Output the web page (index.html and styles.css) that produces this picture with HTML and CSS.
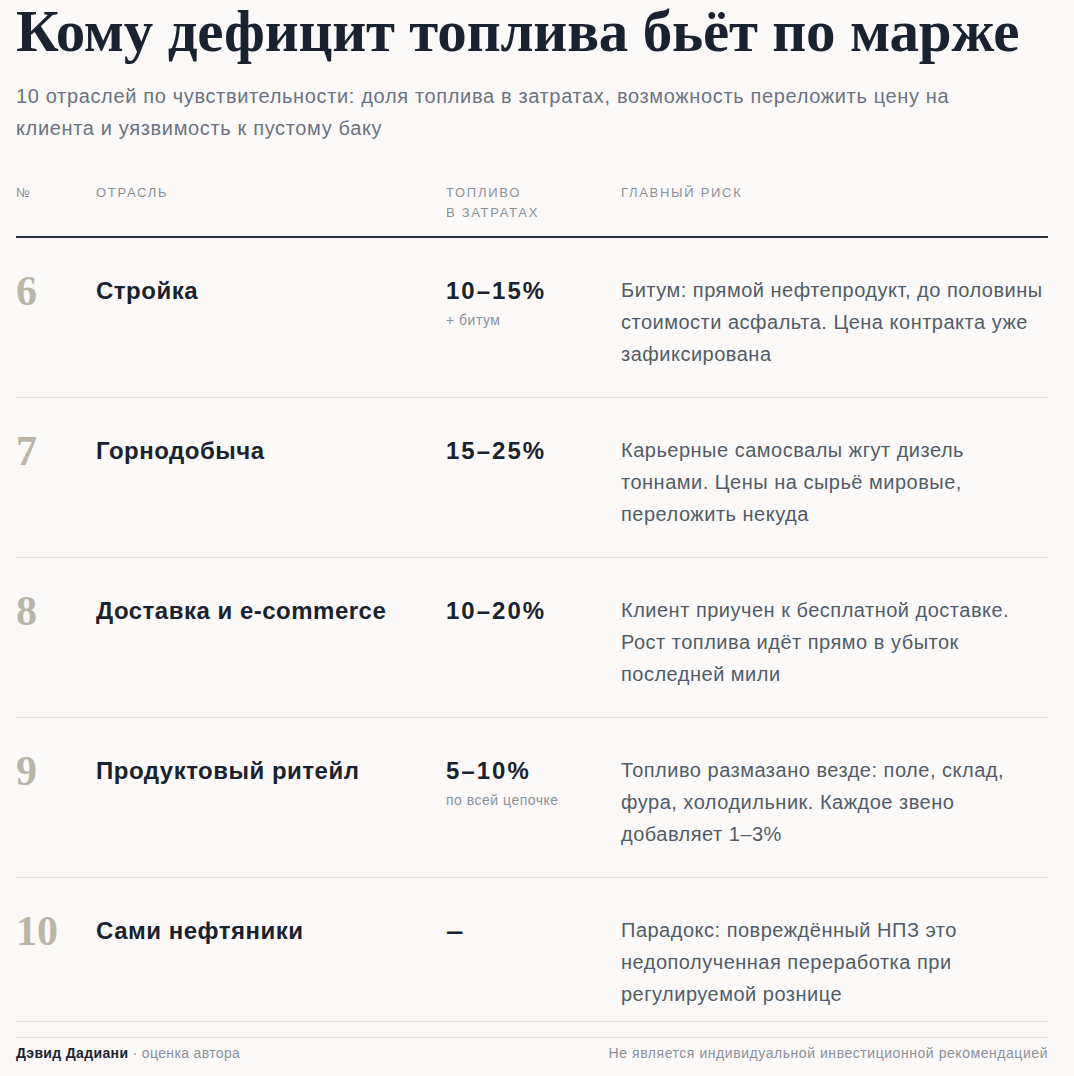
FILE: index.html
```html
<!DOCTYPE html>
<html lang="ru">
<head>
<meta charset="utf-8">
<title>Кому дефицит топлива бьёт по марже</title>
<link rel="stylesheet" href="styles.css">
</head>
<body>
<main class="page">
  <h1 class="title">Кому дефицит топлива бьёт по марже</h1>
  <p class="lead">10 отраслей по чувствительности: доля топлива в затратах, возможность переложить цену на клиента и уязвимость к пустому баку</p>

  <div class="table">
    <div class="head">
      <div class="th">№</div>
      <div class="th">Отрасль</div>
      <div class="th">Топливо<br>в затратах</div>
      <div class="th">Главный риск</div>
    </div>

    <div class="row">
      <div class="num">6</div>
      <div class="name">Стройка</div>
      <div class="fuel"><div class="val">10–15%</div><div class="note">+ битум</div></div>
      <div class="risk">Битум: прямой нефтепродукт, до половины стоимости асфальта. Цена контракта уже зафиксирована</div>
    </div>

    <div class="row">
      <div class="num">7</div>
      <div class="name">Горнодобыча</div>
      <div class="fuel"><div class="val">15–25%</div></div>
      <div class="risk">Карьерные самосвалы жгут дизель тоннами. Цены на сырьё мировые, переложить некуда</div>
    </div>

    <div class="row">
      <div class="num">8</div>
      <div class="name">Доставка и e-commerce</div>
      <div class="fuel"><div class="val">10–20%</div></div>
      <div class="risk">Клиент приучен к бесплатной доставке. Рост топлива идёт прямо в убыток последней мили</div>
    </div>

    <div class="row">
      <div class="num">9</div>
      <div class="name">Продуктовый ритейл</div>
      <div class="fuel"><div class="val">5–10%</div><div class="note">по всей цепочке</div></div>
      <div class="risk">Топливо размазано везде: поле, склад, фура, холодильник. Каждое звено добавляет 1–3%</div>
    </div>

    <div class="row row-last">
      <div class="num">10</div>
      <div class="name">Сами нефтяники</div>
      <div class="fuel"><div class="val val-dash">–</div></div>
      <div class="risk">Парадокс: повреждённый НПЗ это недополученная переработка при регулируемой рознице</div>
    </div>
  </div>

  <footer class="foot">
    <div class="byline"><b class="author">Дэвид Дадиани</b> · оценка автора</div>
    <div class="disclaimer">Не является индивидуальной инвестиционной рекомендацией</div>
  </footer>
</main>
</body>
</html>
```

FILE: styles.css
```css
html, body {
  margin: 0;
  padding: 0;
  background: #fbfaf8;
}
body {
  font-family: "Liberation Sans", Arial, sans-serif;
  color: #1a2230;
}
.page {
  width: 1032px;
  padding: 0 16px;
}
.title {
  margin: 0;
  padding-top: 0;
  font-family: "Liberation Serif", "Times New Roman", serif;
  font-weight: 700;
  font-size: 59px;
  line-height: 62px;
  color: #1a2230;
  letter-spacing: -0.2px;
}
.lead {
  margin: 18px 0 0;
  max-width: 980px;
  font-size: 20px;
  line-height: 32px;
  letter-spacing: 0.65px;
  color: #6b7280;
}
.table {
  margin-top: 39px;
}
.head {
  display: grid;
  grid-template-columns: 80px 350px 175px 1fr;
  padding-bottom: 13px;
  border-bottom: 2px solid #262e3b;
}
.th {
  font-size: 13px;
  line-height: 20px;
  letter-spacing: 1.7px;
  text-transform: uppercase;
  color: #8b9098;
}
.row {
  display: grid;
  grid-template-columns: 80px 350px 175px 1fr;
  align-items: start;
  padding: 36px 0 27px;
  border-bottom: 1px solid #e4e2dd;
}
.row-last {
  padding-bottom: 11px;
}
.num {
  font-family: "Liberation Serif", "Times New Roman", serif;
  font-weight: 700;
  font-size: 42px;
  line-height: 34px;
  color: #bab6a7;
}
.name {
  font-size: 24px;
  line-height: 34px;
  font-weight: 700;
  letter-spacing: 0.5px;
  color: #1a2230;
}
.val {
  font-size: 24px;
  line-height: 34px;
  font-weight: 700;
  letter-spacing: 2px;
  color: #1a2230;
}
.val-dash {
  transform: scaleX(1.3);
  transform-origin: left center;
  display: inline-block;
}
.note {
  margin-top: 2px;
  font-size: 14px;
  line-height: 20px;
  letter-spacing: 0.5px;
  color: #8b9098;
}
.risk {
  font-size: 20px;
  line-height: 32px;
  letter-spacing: 0.5px;
  color: #525c68;
}
.foot {
  margin-top: 15px;
  border-top: 1px solid #e4e2dd;
  padding-top: 5px;
  display: flex;
  justify-content: space-between;
  font-size: 14px;
  line-height: 20px;
  color: #8b9098;
}
.byline {
  letter-spacing: 0.35px;
}
.author {
  color: #1a2230;
  font-weight: 700;
}
.disclaimer {
  letter-spacing: 0.55px;
}
```
